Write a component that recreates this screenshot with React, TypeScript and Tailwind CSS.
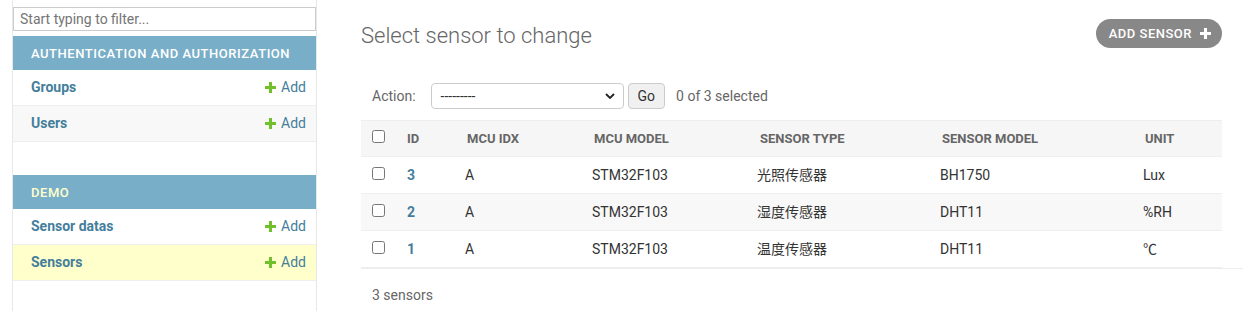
import React from "react";

const apps = [
  {
    name: "Authentication and Authorization",
    current: false,
    models: [
      { name: "Groups", active: false },
      { name: "Users", active: false },
    ],
  },
  {
    name: "Demo",
    current: true,
    models: [
      { name: "Sensor datas", active: false },
      { name: "Sensors", active: true },
    ],
  },
];

const rows = [
  { id: 3, idx: "A", mcu: "STM32F103", type: "光照传感器", model: "BH1750", unit: "Lux" },
  { id: 2, idx: "A", mcu: "STM32F103", type: "湿度传感器", model: "DHT11", unit: "%RH" },
  { id: 1, idx: "A", mcu: "STM32F103", type: "温度传感器", model: "DHT11", unit: "℃" },
];

const cols = "grid grid-cols-[46px_58px_127px_165px_183px_203px_1fr] items-center";

const Plus = ({ className }: { className: string }) => (
  <svg viewBox="0 0 10 10" className={className}>
    <path d="M3.6 0h2.8v3.6H10v2.8H6.4V10H3.6V6.4H0V3.6h3.6z" fill="currentColor" />
  </svg>
);

const Checkbox = () => (
  <input type="checkbox" readOnly className="m-0 h-[13px] w-[13px] block" />
);

export default function App() {
  return (
    <div className="flex min-h-[311px] bg-white font-['Roboto','Noto_Sans_CJK_SC',sans-serif] text-[#333]">
      <div className="w-3 shrink-0" />

      <nav className="w-[305px] shrink-0 border-x border-[#e8e8e8] pt-[7px]">
        <input
          placeholder="Start typing to filter..."
          className="mb-[5px] block h-[24px] w-full border border-[#ccc] px-[6px] text-[14px] placeholder:text-[#757575]"
        />
        {apps.map((app) => (
          <div key={app.name} className="mb-[33px]">
            <div
              className={`flex h-[34px] items-center bg-[#79aec8] pl-[18px] pt-[1px] text-[13px] font-medium uppercase tracking-[0.55px] ${
                app.current ? "text-[#ffc]" : "text-white"
              }`}
            >
              {app.name}
            </div>
            {app.models.map((m, i) => (
              <div
                key={m.name}
                className={`flex h-[36px] items-center justify-between border-b border-[#eee] pl-[18px] pr-[10px] text-[14px] ${
                  m.active ? "bg-[#ffc]" : i % 2 ? "bg-[#f8f8f8]" : "bg-white"
                }`}
              >
                <span className="font-bold text-[#447e9b]">{m.name}</span>
                <span className="flex items-center gap-[5px] text-[#447e9b]">
                  <Plus className="h-[11px] w-[11px] text-[#70bf2b]" />
                  Add
                </span>
              </div>
            ))}
          </div>
        ))}
      </nav>

      <main className="flex-1 pl-[44px]">
        <div className="pr-[21px]">
          <div className="mt-[19px] flex h-[29px] items-center justify-between">
            <h1 className="mt-[3px] text-[22px] font-light text-[#666]">Select sensor to change</h1>
            <button className="flex h-[29px] items-center gap-[8px] rounded-full bg-[#888] pl-[13px] pr-[11px] text-[13px] font-medium uppercase tracking-[0.5px] text-white">
              Add sensor
              <Plus className="h-[11px] w-[11px]" />
            </button>
          </div>

          <div className="mt-[35px] flex h-[26px] items-center text-[14px]">
            <span className="ml-[11px] text-[#666]">Action:</span>
            <div className="ml-[15px] flex h-[26px] w-[193px] items-center justify-between rounded-[4px] border border-[#ccc] bg-white pl-[9px] pr-[8px] text-[14px]">
              <span>---------</span>
              <svg viewBox="0 0 10 6" className="h-[6px] w-[10px]">
                <path d="M1 1l4 4 4-4" fill="none" stroke="#222" strokeWidth="1.8" />
              </svg>
            </div>
            <button className="ml-[4px] h-[26px] rounded-[4px] border border-[#ccc] bg-[#f0f0f0] px-[9px] text-[14px]">
              Go
            </button>
            <span className="ml-[11px] text-[#666]">0 of 3 selected</span>
          </div>

          <div className="mt-[11px]">
            <div className={`${cols} h-[37px] border-y border-[#eee] bg-[#f6f6f6] text-[13px] font-bold uppercase text-[#666]`}>
              <div className="pl-[11px] -mt-[4px]">
                <Checkbox />
              </div>
              <div>ID</div>
              <div className="pl-[2px]">MCU IDX</div>
              <div className="pl-[2px]">MCU MODEL</div>
              <div className="pl-[3px]">Sensor type</div>
              <div className="pl-[2px]">Sensor model</div>
              <div className="pl-[2px]">Unit</div>
            </div>
            {rows.map((r, i) => (
              <div
                key={r.id}
                className={`${cols} h-[37px] border-b border-[#eee] text-[14px] ${i % 2 ? "bg-[#f8f8f8]" : "bg-white"}`}
              >
                <div className="pl-[11px] -mt-[4px]">
                  <Checkbox />
                </div>
                <div className="font-bold text-[#447e9b]">{r.id}</div>
                <div>{r.idx}</div>
                <div>{r.mcu}</div>
                <div>{r.type}</div>
                <div>{r.model}</div>
                <div>{r.unit}</div>
              </div>
            ))}
          </div>
        </div>

        <div className="border-t border-[#eee] pl-[11px] pt-[16px] text-[14px] text-[#666]">3 sensors</div>
      </main>
    </div>
  );
}
